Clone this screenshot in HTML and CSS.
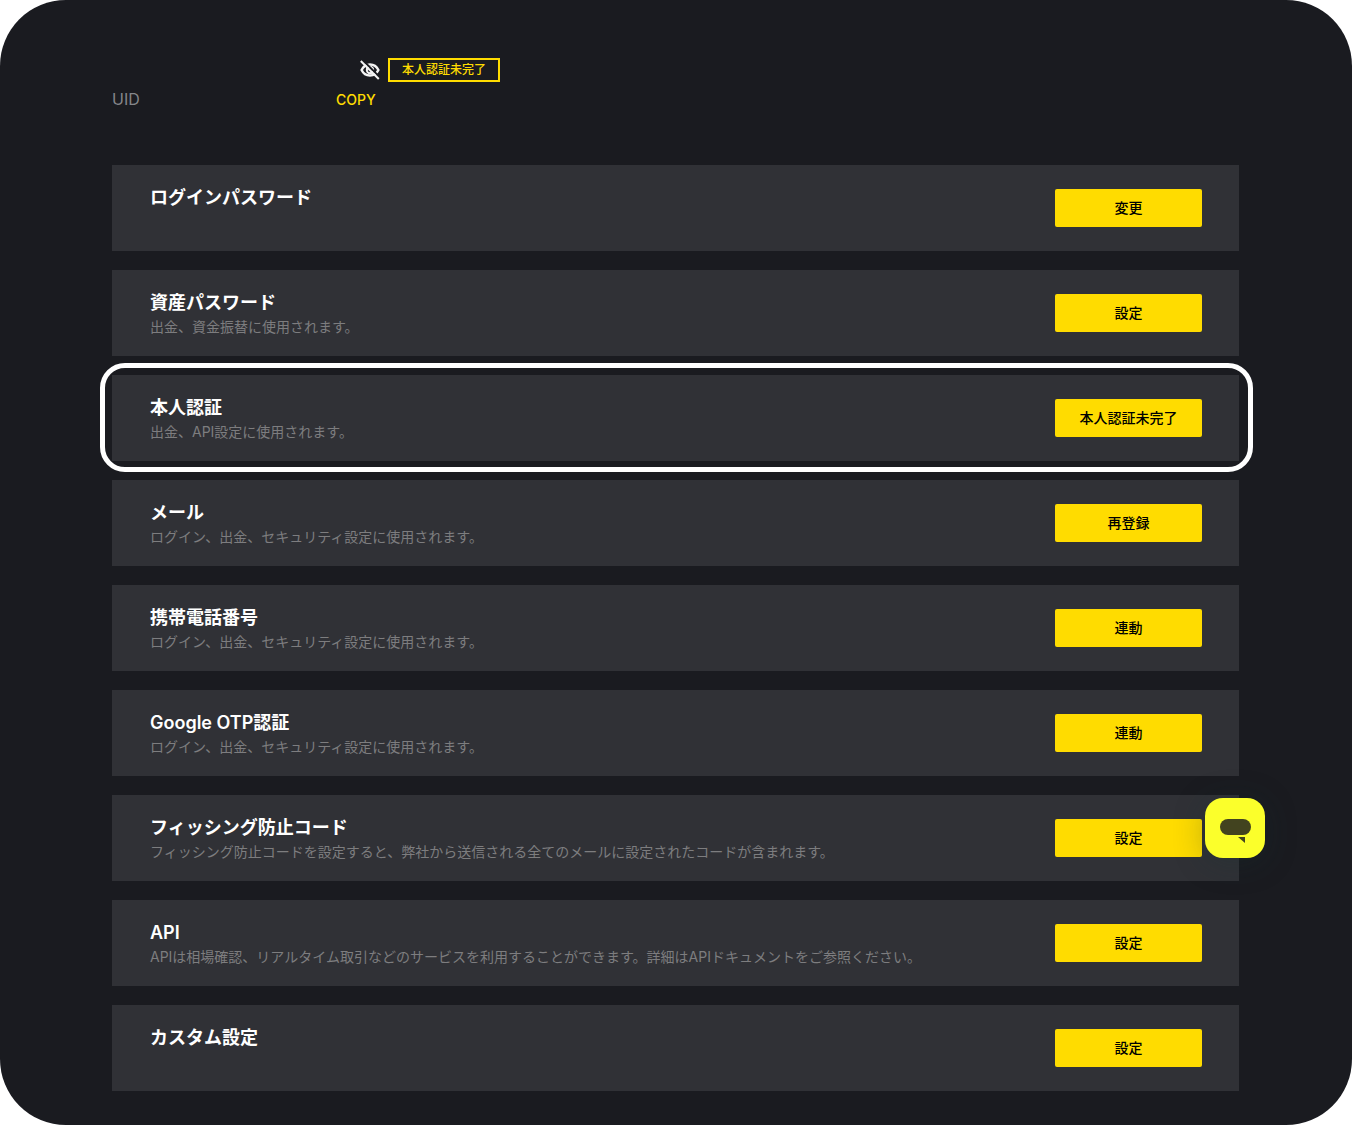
FILE: index.html
```html
<!DOCTYPE html>
<html lang="ja">

<head>
    <meta charset="UTF-8">
    <meta name="viewport" content="width=device-width, initial-scale=1.0">
    <title>セキュリティ設定</title>
    <link rel="stylesheet" href="styles.css">
</head>

<body>

    <main class="page">
        <header class="account">
            <div class="account-row">
                <span class="account-name"></span>
                <button class="eye-btn" type="button" aria-label="表示切替">
                    <svg viewBox="0 0 20 20" width="20" height="20" fill="none" stroke="#f4f4f4" stroke-width="2.400">
                        <path d="M1.600 10C3.300 6.400 6.200 4.500 10 4.500s6.700 1.900 8.400 5.500c-1.700 3.600-4.600 5.500-8.400 5.500s-6.700-1.900-8.400-5.500z" />
                        <circle cx="10" cy="10" r="3.200" stroke-width="2" />
                        <path d="M2.600 0l18 18" stroke="#1a1b20" stroke-width="2" />
                        <path d="M0.800 1l18 18" stroke-width="2" />
                    </svg>
                </button>
                <span class="badge">本人認証未完了</span>
            </div>
            <div class="account-row">
                <span class="uid-label">UID</span>
                <button class="copy-btn" type="button">COPY</button>
            </div>
        </header>

        <ul class="settings">
            <li class="item">
                <div class="item-text">
                    <h2>ログインパスワード</h2>
                </div>
                <button class="btn" type="button">変更</button>
            </li>
            <li class="item">
                <div class="item-text">
                    <h2>資産パスワード</h2>
                    <p>出金、資金振替に使用されます。</p>
                </div>
                <button class="btn" type="button">設定</button>
            </li>
            <li class="item highlight">
                <div class="item-text">
                    <h2>本人認証</h2>
                    <p>出金、API設定に使用されます。</p>
                </div>
                <button class="btn" type="button">本人認証未完了</button>
            </li>
            <li class="item">
                <div class="item-text">
                    <h2>メール</h2>
                    <p>ログイン、出金、セキュリティ設定に使用されます。</p>
                </div>
                <button class="btn" type="button">再登録</button>
            </li>
            <li class="item">
                <div class="item-text">
                    <h2>携帯電話番号</h2>
                    <p>ログイン、出金、セキュリティ設定に使用されます。</p>
                </div>
                <button class="btn" type="button">連動</button>
            </li>
            <li class="item">
                <div class="item-text">
                    <h2>Google OTP認証</h2>
                    <p>ログイン、出金、セキュリティ設定に使用されます。</p>
                </div>
                <button class="btn" type="button">連動</button>
            </li>
            <li class="item">
                <div class="item-text">
                    <h2>フィッシング防止コード</h2>
                    <p>フィッシング防止コードを設定すると、弊社から送信される全てのメールに設定されたコードが含まれます。</p>
                </div>
                <button class="btn" type="button">設定</button>
            </li>
            <li class="item">
                <div class="item-text">
                    <h2>API</h2>
                    <p>APIは相場確認、リアルタイム取引などのサービスを利用することができます。詳細はAPIドキュメントをご参照ください。</p>
                </div>
                <button class="btn" type="button">設定</button>
            </li>
            <li class="item">
                <div class="item-text">
                    <h2>カスタム設定</h2>
                </div>
                <button class="btn" type="button">設定</button>
            </li>
        </ul>
    </main>

    <!-- Chat widget -->
    <button class="chat-btn" type="button" aria-label="チャット">
        <svg viewBox="0 0 60 60" width="60" height="60" fill="#42431f">
            <rect x="15" y="21" width="31" height="16" rx="8" />
            <path d="M33 39h7v6z" />
        </svg>
    </button>

</body>

</html>
```
FILE: styles.css
```css
* {
    margin: 0;
    padding: 0;
    box-sizing: border-box;
}

body {
    font-family: Inter, 'Noto Sans CJK JP', sans-serif;
    background-color: #fff;
    color: #fff;
}

button {
    font-family: inherit;
    border: none;
    background: none;
    cursor: pointer;
}

.page {
    min-height: 100vh;
    padding: 58px 113px 34px 112px;
    background-color: #1a1b20;
    border-radius: 66px;
}

/* Account header */
.account {
    display: flex;
    flex-direction: column;
    gap: 5px;
    margin-bottom: 54px;
}

.account-row {
    display: flex;
    align-items: center;
    height: 24px;
}

.account-name {
    width: 248px;
}

.eye-btn {
    display: flex;
    margin-right: 8px;
}

.badge {
    padding: 0 12px;
    border: 2px solid #ffdc00;
    color: #ffdc00;
    font-size: 12px;
    font-weight: 500;
    line-height: 20px;
}

.uid-label {
    width: 224px;
    color: #85868a;
    font-size: 16px;
}

.copy-btn {
    color: #ffdc00;
    font-size: 14px;
    font-weight: 500;
}

/* Settings list */
.settings {
    display: flex;
    flex-direction: column;
    gap: 19px;
    list-style: none;
}

.item {
    display: flex;
    justify-content: space-between;
    align-items: center;
    min-height: 86px;
    padding: 0 37px 0 38px;
    background-color: #303136;
}

.item-text {
    align-self: flex-start;
    padding-top: 21px;
}

.item h2 {
    font-size: 18px;
    font-weight: 600;
    line-height: 24px;
}

.item p {
    color: #7d7d7f;
    font-size: 14px;
    line-height: 23px;
}

.btn {
    width: 147px;
    height: 38px;
    padding-bottom: 3px;
    border-radius: 2px;
    background-color: #ffdc00;
    color: #000;
    font-size: 14px;
    font-weight: 500;
}

.highlight {
    position: relative;
}

.highlight::after {
    content: '';
    position: absolute;
    inset: -12px -14px -11px -12px;
    border: 5px solid #fff;
    border-radius: 25px;
    pointer-events: none;
}

/* Chat widget */
.chat-btn {
    position: fixed;
    right: 87px;
    bottom: 267px;
    display: flex;
    border-radius: 18px;
    background-color: #fbff2b;
    box-shadow: 0 4px 32px rgba(20, 50, 50, 0.3);
}
```
